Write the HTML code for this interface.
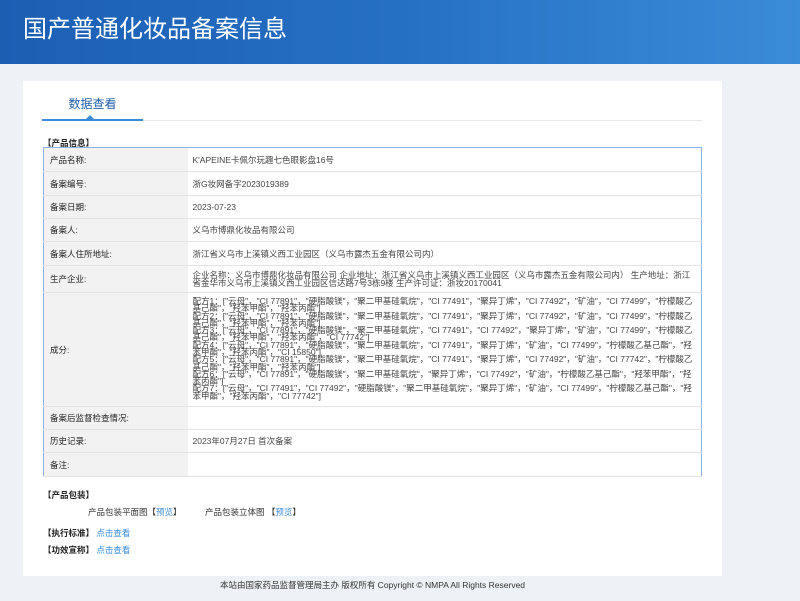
<!DOCTYPE html>
<html><head><meta charset="utf-8"><style>
*{margin:0;padding:0;box-sizing:border-box}
body{width:800px;height:601px;overflow:hidden;background:#eef1f5;font-family:"Liberation Sans","Noto Sans CJK SC",sans-serif;color:#333;position:relative}
.hd{position:absolute;left:0;top:0;width:800px;height:64px;background:linear-gradient(90deg,#1b5fb3,#2670c4 50%,#3a8bd8);}
.hd h1{position:absolute;left:23px;top:9px;font-size:24px;font-weight:normal;color:#fff}
.card{position:absolute;left:23px;top:81px;width:699px;height:495px;background:#fff}
.tab{position:absolute;left:42px;top:94px;width:101px;text-align:center;font-size:12px;color:#1e5fa8;line-height:20px}
.tabline{position:absolute;left:42px;top:120px;width:660px;height:1px;background:#e6e6e6}
.tabact{position:absolute;left:42px;top:119px;width:101px;height:2px;background:#3a8bd8}
.tri{position:absolute;left:86px;top:115px;width:0;height:0;border-left:4px solid transparent;border-right:4px solid transparent;border-bottom:4px solid #3a8bd8}
.sec{position:absolute;font-size:8.5px;font-weight:bold;color:#222}
table{position:absolute;left:43px;top:147px;width:659px;border-collapse:collapse;border:1px solid #8fb2e4;font-size:8.5px}
td{border-bottom:1px solid #e3e3e3;padding:0 6px;vertical-align:middle}
td.l{width:144px;background:#f2f2f2;color:#222}
td.v{color:#444;padding-left:5px}
.ing{font-size:8.5px;line-height:7.3px;padding-top:3px;padding-bottom:4px}
.small{font-size:8.5px;position:absolute;color:#333}
a{color:#3a8bd8;text-decoration:none}
.ft{position:absolute;left:0;top:577px;width:800px;height:24px;background:#eef1f5;font-size:8.5px;color:#333;text-align:center;line-height:17px;padding-right:55px}
</style></head><body>
<div class="hd"><h1>国产普通化妆品备案信息</h1></div>
<div class="card"></div>
<div class="tab">数据查看</div>
<div class="tabline"></div><div class="tabact"></div><div class="tri"></div>
<div class="sec" style="left:43px;top:137px">【产品信息】</div>
<table>
<tr style="height:24px"><td class="l">产品名称:</td><td class="v">K'APEINE卡佩尔玩趣七色眼影盘16号</td></tr>
<tr style="height:24px"><td class="l">备案编号:</td><td class="v">浙G妆网备字2023019389</td></tr>
<tr style="height:23px"><td class="l">备案日期:</td><td class="v">2023-07-23</td></tr>
<tr style="height:23px"><td class="l">备案人:</td><td class="v">义乌市博鼎化妆品有限公司</td></tr>
<tr style="height:24px"><td class="l">备案人住所地址:</td><td class="v">浙江省义乌市上溪镇义西工业园区（义乌市露杰五金有限公司内）</td></tr>
<tr style="height:27px"><td class="l">生产企业:</td><td class="v" style="line-height:8px">企业名称：义乌市博鼎化妆品有限公司 企业地址：浙江省义乌市上溪镇义西工业园区（义乌市露杰五金有限公司内） 生产地址：浙江省金华市义乌市上溪镇义西工业园区信达路7号3栋9楼 生产许可证：浙妆20170041</td></tr>
<tr style="height:114px"><td class="l">成分:</td><td class="v ing">配方1：["云母"，"CI 77891"，"硬脂酸镁"，"聚二甲基硅氧烷"，"CI 77491"，"聚异丁烯"，"CI 77492"，"矿油"，"CI 77499"，"柠檬酸乙基己酯"，"羟苯甲酯"，"羟苯丙酯"]<br>配方2：["云母"，"CI 77891"，"硬脂酸镁"，"聚二甲基硅氧烷"，"CI 77491"，"聚异丁烯"，"CI 77492"，"矿油"，"CI 77499"，"柠檬酸乙基己酯"，"羟苯甲酯"，"羟苯丙酯"]<br>配方3：["云母"，"CI 77891"，"硬脂酸镁"，"聚二甲基硅氧烷"，"CI 77491"，"CI 77492"，"聚异丁烯"，"矿油"，"CI 77499"，"柠檬酸乙基己酯"，"羟苯甲酯"，"羟苯丙酯"，"CI 77742"]<br>配方4：["云母"，"CI 77891"，"硬脂酸镁"，"聚二甲基硅氧烷"，"CI 77491"，"聚异丁烯"，"矿油"，"CI 77499"，"柠檬酸乙基己酯"，"羟苯甲酯"，"羟苯丙酯"，"CI 15850"]<br>配方5：["云母"，"CI 77891"，"硬脂酸镁"，"聚二甲基硅氧烷"，"CI 77491"，"聚异丁烯"，"CI 77492"，"矿油"，"CI 77742"，"柠檬酸乙基己酯"，"羟苯甲酯"，"羟苯丙酯"]<br>配方6：["云母"，"CI 77891"，"硬脂酸镁"，"聚二甲基硅氧烷"，"聚异丁烯"，"CI 77492"，"矿油"，"柠檬酸乙基己酯"，"羟苯甲酯"，"羟苯丙酯"]<br>配方7：["云母"，"CI 77491"，"CI 77492"，"硬脂酸镁"，"聚二甲基硅氧烷"，"聚异丁烯"，"矿油"，"CI 77499"，"柠檬酸乙基己酯"，"羟苯甲酯"，"羟苯丙酯"，"CI 77742"]</td></tr>
<tr style="height:23px"><td class="l">备案后监督检查情况:</td><td class="v"></td></tr>
<tr style="height:23px"><td class="l">历史记录:</td><td class="v">2023年07月27日 首次备案</td></tr>
<tr style="height:24px"><td class="l">备注:</td><td class="v"></td></tr>
</table>
<div class="sec" style="left:43px;top:489px">【产品包装】</div>
<div class="small" style="left:88px;top:506px">产品包装平面图【<a>预览</a>】</div>
<div class="small" style="left:205px;top:506px">产品包装立体图 【<a>预览</a>】</div>
<div class="sec" style="left:43px;top:527px">【执行标准】 <a style="font-weight:normal">点击查看</a></div>
<div class="sec" style="left:43px;top:544px">【功效宣称】 <a style="font-weight:normal">点击查看</a></div>
<div class="ft">本站由国家药品监督管理局主办 版权所有 Copyright © NMPA All Rights Reserved</div>
</body></html>
